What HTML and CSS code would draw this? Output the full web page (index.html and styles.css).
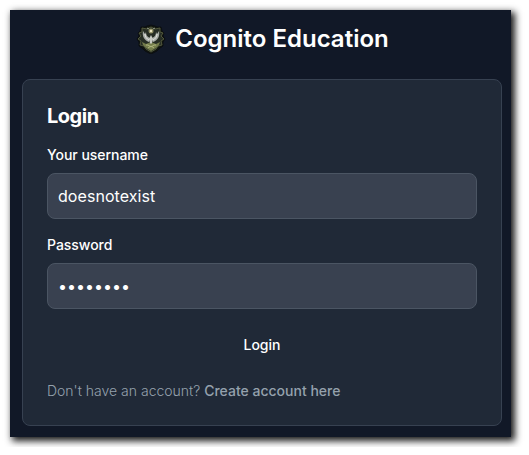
FILE: index.html
```html
<!DOCTYPE html>
<html lang="en">
<head>
<meta charset="utf-8">
<title>Cognito Education</title>
<link rel="stylesheet" href="styles.css">
</head>
<body>
<main class="page">
  <a class="brand">
    <svg class="logo" viewBox="0 0 32 32" aria-hidden="true">
      <path d="M6 5l4 0 2-1 4-1 4 1 2 1 4 0 1 4 2 2-1 3 2 3-2 3v4l-3 2-3 3-6 3-6-3-3-3-3-2v-4l-2-3 2-3-1-3 2-2z" fill="#10150f" stroke="#0b0e12" stroke-width="1"/>
      <path d="M7 6l5 1 4-2 4 2 5-1v4l3 1-2 3 3 3-3 2 1 4-4 1-2 3-5 3-5-3-2-3-4-1 1-4-3-2 3-3-2-3 3-1z" fill="#262d24" stroke="#5d6344" stroke-width=".8"/>
      <path d="M7 20l4 2 5-2 5 2 4-2-1 3-3 3-5 3-5-3-3-3z" fill="#747d4b"/>
      <path d="M11 23l2 0 3 2 3-2 2 0M13 26l3-2 3 2" fill="none" stroke="#b0b77e" stroke-width="1"/>
      <path d="M8 9c-1 5 1 9 6 11l1-4c-3-1-4-3-4-6l-1 2zm16 0c1 5-1 9-6 11l-1-4c3-1 4-3 4-6l1 2z" fill="#a9ada8"/>
      <path d="M10 12c0 3 2 5 4 6m8-6c0 3-2 5-4 6" fill="none" stroke="#e4e5df" stroke-width="1"/>
      <path d="M16 13l2 4-1 4-1 1-1-1-1-4z" fill="#c9cbc4"/>
      <circle cx="16" cy="9" r="2.5" fill="#929066"/>
      <circle cx="16" cy="9" r="1.2" fill="#eee8c5"/>
      <path d="M12 6l2 1m6-1l-2 1" stroke="#99a08b" stroke-width="1"/>
    </svg>
    <span class="brand-name">Cognito Education</span>
  </a>
  <section class="card">
    <h1 class="title">Login</h1>
    <form class="form">
      <div>
        <label class="label" for="username">Your username</label>
        <input class="field" id="username" type="text" value="doesnotexist">
      </div>
      <div>
        <label class="label" for="password">Password</label>
        <input class="field field-password" id="password" type="password" value="password">
      </div>
      <button class="submit" type="button">Login</button>
      <p class="signup">Don't have an account? <a class="signup-link">Create account here</a></p>
    </form>
  </section>
</main>
</body>
</html>
```
FILE: styles.css
```css
* { box-sizing: border-box; }
body {
  margin: 0;
  padding: 10px;
  background: #fff;
  font-family: Inter, sans-serif;
  color: #fff;
  overflow: hidden;
}
.page {
  width: 501px;
  height: 427px;
  padding: 12px 9px 11px 12px;
  background: #111827;
  box-shadow: 3px 3px 7px 1px rgba(0, 0, 0, .9);
}
.brand {
  display: flex;
  align-items: center;
  justify-content: center;
  gap: 8px;
  height: 32px;
  margin-bottom: 25px;
  font-size: 24px;
  font-weight: 600;
  line-height: 32px;
}
.brand-name { padding-top: 2px; }
.logo { width: 32px; height: 32px; }
.card {
  height: 347px;
  padding: 24px;
  background: #202937;
  border: 1px solid #374151;
  border-radius: 8px;
}
.title {
  margin: 0 0 16px;
  font-size: 20px;
  font-weight: 700;
  line-height: 25px;
  letter-spacing: -.5px;
}
.form { display: flex; flex-direction: column; gap: 16px; }
.label {
  display: block;
  margin-bottom: 8px;
  font-size: 14px;
  font-weight: 500;
  line-height: 20px;
  letter-spacing: -.03px;
}
.field {
  display: block;
  width: 100%;
  height: 46px;
  padding: 10px;
  background: #394150;
  border: 1px solid #4b5563;
  border-radius: 8px;
  color: #fff;
  font: 400 16px/24px Inter, sans-serif;
  letter-spacing: .06px;
}
.field-password { letter-spacing: 0; }
.submit {
  height: 40px;
  padding: 10px 20px;
  background: none;
  border: 0;
  color: #fff;
  font: 500 14px/20px Inter, sans-serif;
}
.signup {
  margin: 0;
  color: #95a1ad;
  font-size: 14px;
  font-weight: 300;
  line-height: 20px;
}
.signup-link { font-weight: 500; }
```
